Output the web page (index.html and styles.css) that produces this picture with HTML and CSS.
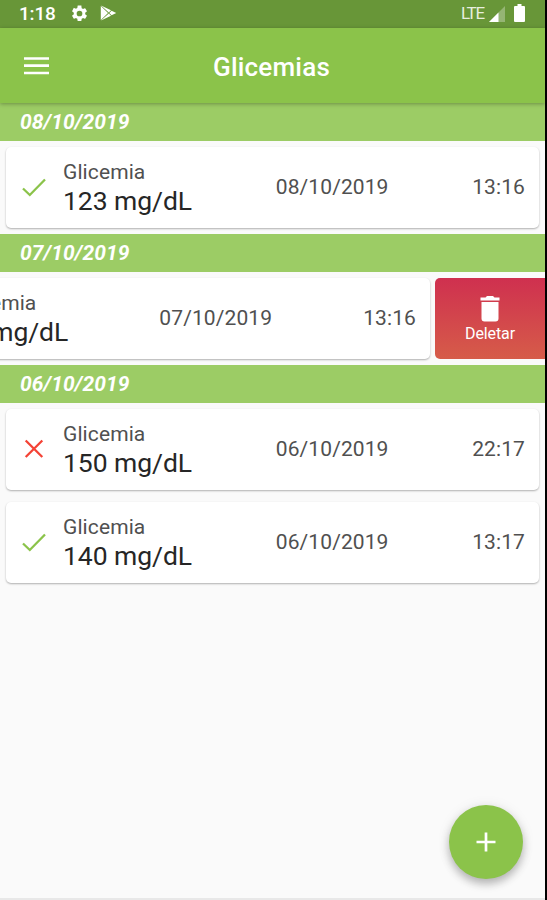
FILE: index.html
```html
<!DOCTYPE html>
<html lang="pt-BR">
<head>
<meta charset="utf-8">
<title>Glicemias</title>
<link rel="stylesheet" href="styles.css">
</head>
<body>
<div class="phone">
  <div class="status">
    <span class="clock">1:18</span>
    <svg class="gear" viewBox="0 0 24 24"><path d="M19.14 12.94c.04-.3.06-.61.06-.94 0-.32-.02-.64-.07-.94l2.03-1.58a.49.49 0 0 0 .12-.61l-1.92-3.32a.49.49 0 0 0-.59-.22l-2.39.96c-.5-.38-1.03-.7-1.62-.94l-.36-2.54A.48.48 0 0 0 13.92 2h-3.84c-.24 0-.43.17-.47.41l-.36 2.54c-.59.24-1.13.57-1.62.94l-2.39-.96a.49.49 0 0 0-.59.22L2.74 8.87c-.12.21-.08.47.12.61l2.03 1.58c-.05.3-.09.63-.09.94s.02.64.07.94l-2.03 1.58a.49.49 0 0 0-.12.61l1.92 3.32c.12.22.37.29.59.22l2.39-.96c.5.38 1.03.7 1.62.94l.36 2.54c.05.24.24.41.48.41h3.84c.24 0 .44-.17.47-.41l.36-2.54c.59-.24 1.13-.56 1.62-.94l2.39.96c.22.08.47 0 .59-.22l1.92-3.32a.49.49 0 0 0-.12-.61zM12 15.6A3.6 3.6 0 1 1 12 8.4a3.6 3.6 0 0 1 0 7.2z"/></svg>
    <svg class="play" viewBox="0 0 17 16"><path d="M1 .5 11 5.300 8.800 7.400zM.8 1 8 8 .8 15zM1 15.500 8.800 8.600 11 10.700zM11.600 5.700l4.600 2.300-4.600 2.300L9.300 8z"/></svg>
    <span class="network">LTE</span>
    <svg class="signal" viewBox="0 0 16 16"><path opacity=".3" d="M16 0v16H0z"/><path d="M9.5 6.5V16H0z"/></svg>
    <svg class="battery" viewBox="0 0 11 18"><path d="M3.5 0h4v2H10q1 0 1 1v14q0 1-1 1H1q-1 0-1-1V3q0-1 1-1h2.5z"/></svg>
  </div>
  <header class="appbar">
    <svg class="menu" viewBox="0 0 25 18"><path d="M0 1.5h25M0 8.7h25M0 16h25"/></svg>
    <h1>Glicemias</h1>
  </header>
  <main>
    <h2>08/10/2019</h2>
    <div class="row">
      <article class="card">
        <div class="lead">
          <svg class="mark ok" viewBox="0 0 32 32"><path d="M5 17.5 11.8 24 27 8.5"/></svg>
          <div class="reading"><span class="label">Glicemia</span><span class="value">123 mg/dL</span></div>
        </div>
        <span class="date">08/10/2019</span><span class="time">13:16</span>
      </article>
    </div>
    <h2>07/10/2019</h2>
    <div class="row swiped">
      <article class="card">
        <div class="lead">
          <svg class="mark ok" viewBox="0 0 32 32"><path d="M5 17.5 11.8 24 27 8.5"/></svg>
          <div class="reading"><span class="label">Glicemia</span><span class="value">70 mg/dL</span></div>
        </div>
        <span class="date">07/10/2019</span><span class="time">13:16</span>
      </article>
      <div class="delete">
        <svg class="trash" viewBox="0 0 20 26"><path d="M1.5 6h17v16.500q0 3-3 3h-11q-3 0-3-3zM.5 1.500h5L7 0h6l1.500 1.500h5v3H.5z"/></svg>
        <span>Deletar</span>
      </div>
    </div>
    <h2>06/10/2019</h2>
    <div class="row">
      <article class="card">
        <div class="lead">
          <svg class="mark bad" viewBox="0 0 32 32"><path d="M7.700 7.500 24.300 24M24.300 7.500 7.700 24"/></svg>
          <div class="reading"><span class="label">Glicemia</span><span class="value">150 mg/dL</span></div>
        </div>
        <span class="date">06/10/2019</span><span class="time">22:17</span>
      </article>
    </div>
    <div class="row">
      <article class="card">
        <div class="lead">
          <svg class="mark ok" viewBox="0 0 32 32"><path d="M5 17.5 11.8 24 27 8.5"/></svg>
          <div class="reading"><span class="label">Glicemia</span><span class="value">140 mg/dL</span></div>
        </div>
        <span class="date">06/10/2019</span><span class="time">13:17</span>
      </article>
    </div>
  </main>
  <div class="fab"><svg viewBox="0 0 20 20"><path d="M10 .5v19M.5 10h19"/></svg></div>
</div>
</body>
</html>
```
FILE: styles.css
```css
* { box-sizing: border-box; }
body { margin: 0; background: #000; font-family: Roboto, "Liberation Sans", sans-serif; }
.phone {
  position: relative; width: 545px; height: 900px; overflow: hidden;
  background: #fafafa; border-bottom: 2px solid #e8e8e8;
  display: flex; flex-direction: column;
}
svg { display: block; flex: none; fill: #fff; }
.status {
  height: 28px; background: #689638; display: flex; align-items: center;
  padding: 0 20px 2px 19px; color: #fff;
}
.clock { width: 51px; font-size: 19px; font-weight: 500; line-height: 26px; padding-top: 2px; letter-spacing: -.2px; }
.gear { width: 19px; height: 19px; }
.play { width: 17px; height: 16px; margin-left: 11px; }
.network { margin-left: auto; font-size: 17px; line-height: 26px; letter-spacing: -1.2px; color: #e6eede; }
.signal { width: 16px; height: 16px; margin: 2px 9px 0 5px; }
.battery { width: 11px; height: 18px; }
.appbar {
  position: relative; z-index: 1; height: 75px; background: #8bc34a;
  display: flex; align-items: center; padding: 0 25px 0 24px;
  box-shadow: 0 1px 4px rgba(0, 0, 0, .3);
}
.menu { width: 25px; height: 18px; stroke: #fff; stroke-width: 2.7; margin-top: 1px; }
h1 { flex: 1; margin: 3px 26px 0 0; text-align: center; color: #fff; font-size: 26px; line-height: 30px; font-weight: 500; letter-spacing: .2px; }
h2 {
  margin: 0; height: 38px; padding: 0 20px; background: #9ccc65; color: #fff;
  font-size: 21px; line-height: 38px; font-weight: 700; font-style: italic; letter-spacing: .1px;
}
.row { display: flex; height: 93px; padding: 6px; }
.card {
  flex: none; width: 533px; height: 81px; border-radius: 5px; background: #fff;
  display: flex; align-items: center; justify-content: space-between; padding: 0 14px 1px 12px; color: #505050;
  box-shadow: 0 1px 2px rgba(0, 0, 0, .3);
}
.lead { display: flex; align-items: center; }
.mark { width: 32px; height: 32px; fill: none; stroke-width: 2.3; }
.ok { stroke: #8bc34a; }
.bad { stroke: #f44336; }
.reading { display: flex; flex-direction: column; margin-left: 13px; padding-top: 1px; }
.label { font-size: 21px; line-height: 27px; letter-spacing: .1px; }
.value { font-size: 26.500px; line-height: 30px; color: #262626; letter-spacing: -.05px; }
.date, .time { font-size: 21px; line-height: 26px; letter-spacing: .1px; }
.swiped .card { margin-left: -109px; }
.swiped { padding-left: 0; padding-right: 0; margin-left: 6px; gap: 5px; }
.delete {
  flex: 1; border-radius: 5px 0 0 5px; background: linear-gradient(#cf304f, #d65c49);
  display: flex; flex-direction: column; align-items: center; justify-content: center; gap: 1px;
  color: #fff; font-size: 16px; line-height: 22px; padding-top: 4px; letter-spacing: -.1px;
}
.trash { width: 20px; height: 26px; }
.fab {
  position: absolute; left: 449px; top: 805px; width: 74px; height: 74px; border-radius: 50%;
  background: #8bc34a; display: grid; place-items: center;
  box-shadow: 0 5px 9px rgba(0, 0, 0, .25), 0 1px 14px rgba(0, 0, 0, .08);
}
.fab svg { width: 20px; height: 20px; stroke: #fff; stroke-width: 2.700; }
```
